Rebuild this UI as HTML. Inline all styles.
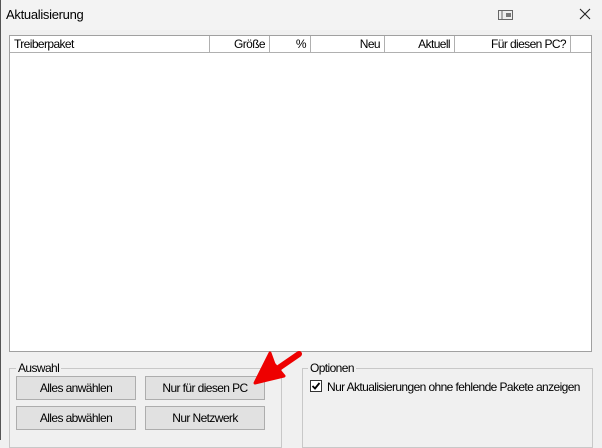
<!DOCTYPE html>
<html><head><style>
body{margin:0;width:602px;height:440px;background:#f0f0f0;font-family:"Liberation Sans",sans-serif;font-size:12px;letter-spacing:-0.6px;color:#000;position:relative;overflow:hidden;white-space:nowrap}
.a{position:absolute}
.title{left:0;top:0;width:602px;height:30px;background:#f3f3f3;border-left:1px solid #555;box-sizing:border-box}
.list{left:9px;top:35px;width:583px;height:317px;background:#fff;border:1px solid #a0a0a0;box-sizing:border-box}
.hd{top:0;height:17px;border-right:1px solid #b0b0b0;border-bottom:1px solid #b0b0b0;box-sizing:border-box;line-height:16px;padding:0 4px;background:#fff}
.grp{border:1px solid #c8c8c8;box-sizing:border-box}
.lg{background:#f0f0f0;padding:0 2px;line-height:12px}
.btn{background:#e1e1e1;border:1px solid #adadad;box-sizing:border-box;text-align:center;line-height:22px;height:24px}
</style></head><body>
<div class="a title"></div>
<div class="a" style="left:6px;top:7px;font-size:13px;letter-spacing:-0.3px">Aktualisierung</div>
<svg class="a" style="left:498px;top:9px" width="16" height="12"><rect x="0.5" y="1.5" width="14" height="9" fill="#eee" stroke="#666"/><rect x="8" y="4" width="5" height="4" fill="#777"/><line x1="4" y1="2" x2="4" y2="10" stroke="#666"/></svg>
<svg class="a" style="left:579px;top:8px" width="12" height="12"><path d="M1 1L11 11M11 1L1 11" stroke="#222" stroke-width="1.1"/></svg>
<div class="a" style="left:0;top:30px;width:1px;height:410px;background:#555"></div>
<div class="a list">
<div class="a hd" style="left:0;width:200px">Treiberpaket</div>
<div class="a hd" style="left:200px;width:60px;text-align:right">Größe</div>
<div class="a hd" style="left:260px;width:41px;text-align:right">%</div>
<div class="a hd" style="left:301px;width:74px;text-align:right">Neu</div>
<div class="a hd" style="left:375px;width:70px;text-align:right">Aktuell</div>
<div class="a hd" style="left:445px;width:116px;text-align:right">Für diesen PC?</div>
<div class="a hd" style="left:561px;width:20px;border-right:none"></div>
</div>
<div class="a grp" style="left:9px;top:368px;width:273px;height:80px"></div>
<div class="a lg" style="left:16px;top:362px">Auswahl</div>
<div class="a btn" style="left:16px;top:376px;width:120px">Alles anwählen</div>
<div class="a btn" style="left:145px;top:376px;width:120px">Nur für diesen PC</div>
<div class="a btn" style="left:16px;top:406px;width:120px">Alles abwählen</div>
<div class="a btn" style="left:145px;top:406px;width:120px">Nur Netzwerk</div>
<div class="a grp" style="left:302px;top:368px;width:291px;height:80px"></div>
<div class="a lg" style="left:308px;top:362px">Optionen</div>
<div class="a" style="left:310px;top:380px;width:12px;height:12px;border:1px solid #333;background:#fff;box-sizing:border-box"></div>
<svg class="a" style="left:311px;top:381px" width="10" height="10"><path d="M1.5 5L4 7.5L8.5 2" stroke="#000" stroke-width="1.8" fill="none"/></svg>
<div class="a" style="left:327px;top:380px">Nur Aktualisierungen ohne fehlende Pakete anzeigen</div>
<svg class="a" style="left:240px;top:340px" width="70" height="60"><path d="M59 14L27 36" stroke="#e00" stroke-width="6" stroke-linecap="round"/><path d="M15 43L30 13L34 24L44 36Z" fill="#e00" stroke="#e00" stroke-width="3" stroke-linejoin="round"/></svg>
</body></html>
